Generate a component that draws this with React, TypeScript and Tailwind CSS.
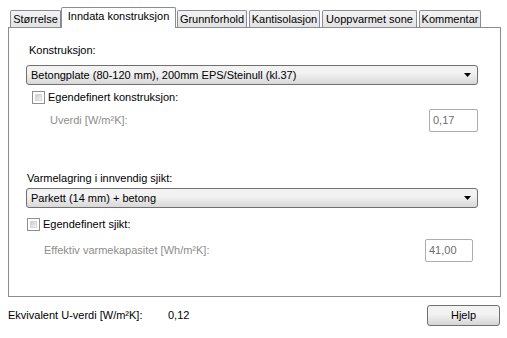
import React from "react";

const font = { fontFamily: '"Liberation Sans", Arial, sans-serif' };

function Tab({ label, w, ml, selected }: { label: string; w: string; ml: string; selected?: boolean }) {
  if (selected) {
    return (
      <div
        className={`${w} ${ml} h-[21px] relative z-10 -mb-px bg-white border border-b-0 border-[#898c95] rounded-t-[2px] flex items-start justify-center pt-[2px] text-[11px] leading-[13px] text-black`}
      >
        {label}
      </div>
    );
  }
  return (
    <div
      className={`${w} ${ml} h-[17px] border border-b-0 border-[#898c95] rounded-t-[2px] bg-gradient-to-b from-[#f3f3f3] to-[#e3e3e3] flex items-center justify-center text-[11px] leading-[13px] text-black`}
    >
      {label}
    </div>
  );
}

function Combo({ text, ml }: { text: string; ml: string }) {
  return (
    <div
      className={`${ml} w-[452px] h-[20px] border border-[#707070] rounded-[3px] bg-gradient-to-b from-[#f2f2f2] from-40% to-[#d8d8d8] flex items-center pl-[4px] pr-[6px] text-[11px] leading-[13px] text-black`}
    >
      <span className="flex-1">{text}</span>
      <svg width="7" height="4" viewBox="0 0 7 4">
        <path d="M0 0 H7 L3.5 4 Z" fill="#000" />
      </svg>
    </div>
  );
}

function Check({ label, ml }: { label: string; ml: string }) {
  return (
    <div className={`${ml} flex items-center h-[13px]`}>
      <div className="w-[13px] h-[13px] border border-[#8e8f8f] bg-white p-[2px]">
        <div className="w-full h-full bg-gradient-to-br from-[#cbcbcb] to-[#f4f4f4] border border-[#d6d6d6]" />
      </div>
      <span className="ml-[3px] text-[11px] leading-[13px] text-black">{label}</span>
    </div>
  );
}

function Field({ value, w }: { value: string; w: string }) {
  return (
    <div
      className={`${w} h-[23px] border border-[#abadb3] rounded-[2px] bg-white flex items-center pl-[3px] text-[11px] leading-[13px] text-[#6d6d6d]`}
    >
      {value}
    </div>
  );
}

export default function App() {
  return (
    <div className="w-[507px] h-[338px] bg-white overflow-hidden flex flex-col pt-[6px]" style={font}>
      <div className="flex items-end h-[21px]">
        <Tab label="Størrelse" w="w-[51px]" ml="ml-[10px]" />
        <Tab label="Inndata konstruksjon" w="w-[115px]" ml="ml-0" selected />
        <Tab label="Grunnforhold" w="w-[70px]" ml="ml-[1px]" />
        <Tab label="Kantisolasjon" w="w-[71px]" ml="ml-[2px]" />
        <Tab label="Uoppvarmet sone" w="w-[95px]" ml="ml-[2px]" />
        <Tab label="Kommentar" w="w-[62px]" ml="ml-[2px]" />
      </div>
      <div className="ml-[8px] w-[493px] h-[270px] border border-[#898c95] bg-white flex flex-col">
        <div className="mt-[16px] ml-[20px] text-[11px] leading-[13px] text-black">Konstruksjon:</div>
        <div className="mt-[8px]">
          <Combo text="Betongplate (80-120 mm), 200mm EPS/Steinull (kl.37)" ml="ml-[17px]" />
        </div>
        <div className="mt-[6px]">
          <Check label="Egendefinert konstruksjon:" ml="ml-[23px]" />
        </div>
        <div className="mt-[5px] flex items-center h-[23px]">
          <span className="ml-[41px] text-[11px] leading-[13px] text-[#8d8d8d]">Uverdi [W/m²K]:</span>
          <div className="ml-auto mr-[22px]">
            <Field value="0,17" w="w-[49px]" />
          </div>
        </div>
        <div className="mt-[40px] ml-[18px] text-[11px] leading-[13px] text-black">Varmelagring i innvendig sjikt:</div>
        <div className="mt-[3px]">
          <Combo text="Parkett (14 mm) + betong" ml="ml-[17px]" />
        </div>
        <div className="mt-[10px]">
          <Check label="Egendefinert sjikt:" ml="ml-[18px]" />
        </div>
        <div className="mt-[8px] flex items-center h-[23px]">
          <span className="ml-[35px] text-[11px] leading-[13px] text-[#8d8d8d]">Effektiv varmekapasitet [Wh/m²K]:</span>
          <div className="ml-auto mr-[27px]">
            <Field value="41,00" w="w-[48px]" />
          </div>
        </div>
      </div>
      <div className="mt-[8px] flex items-center h-[21px]">
        <span className="ml-[8px] w-[160px] text-[11px] leading-[13px] text-black">Ekvivalent U-verdi [W/m²K]:</span>
        <span className="text-[11px] leading-[13px] text-black">0,12</span>
        <div className="ml-auto mr-[7px] w-[73px] h-[21px] border border-[#707070] rounded-[3px] bg-gradient-to-b from-[#f2f2f2] from-45% to-[#d5d5d5] flex items-center justify-center text-[11px] leading-[13px] text-black">
          Hjelp
        </div>
      </div>
    </div>
  );
}
